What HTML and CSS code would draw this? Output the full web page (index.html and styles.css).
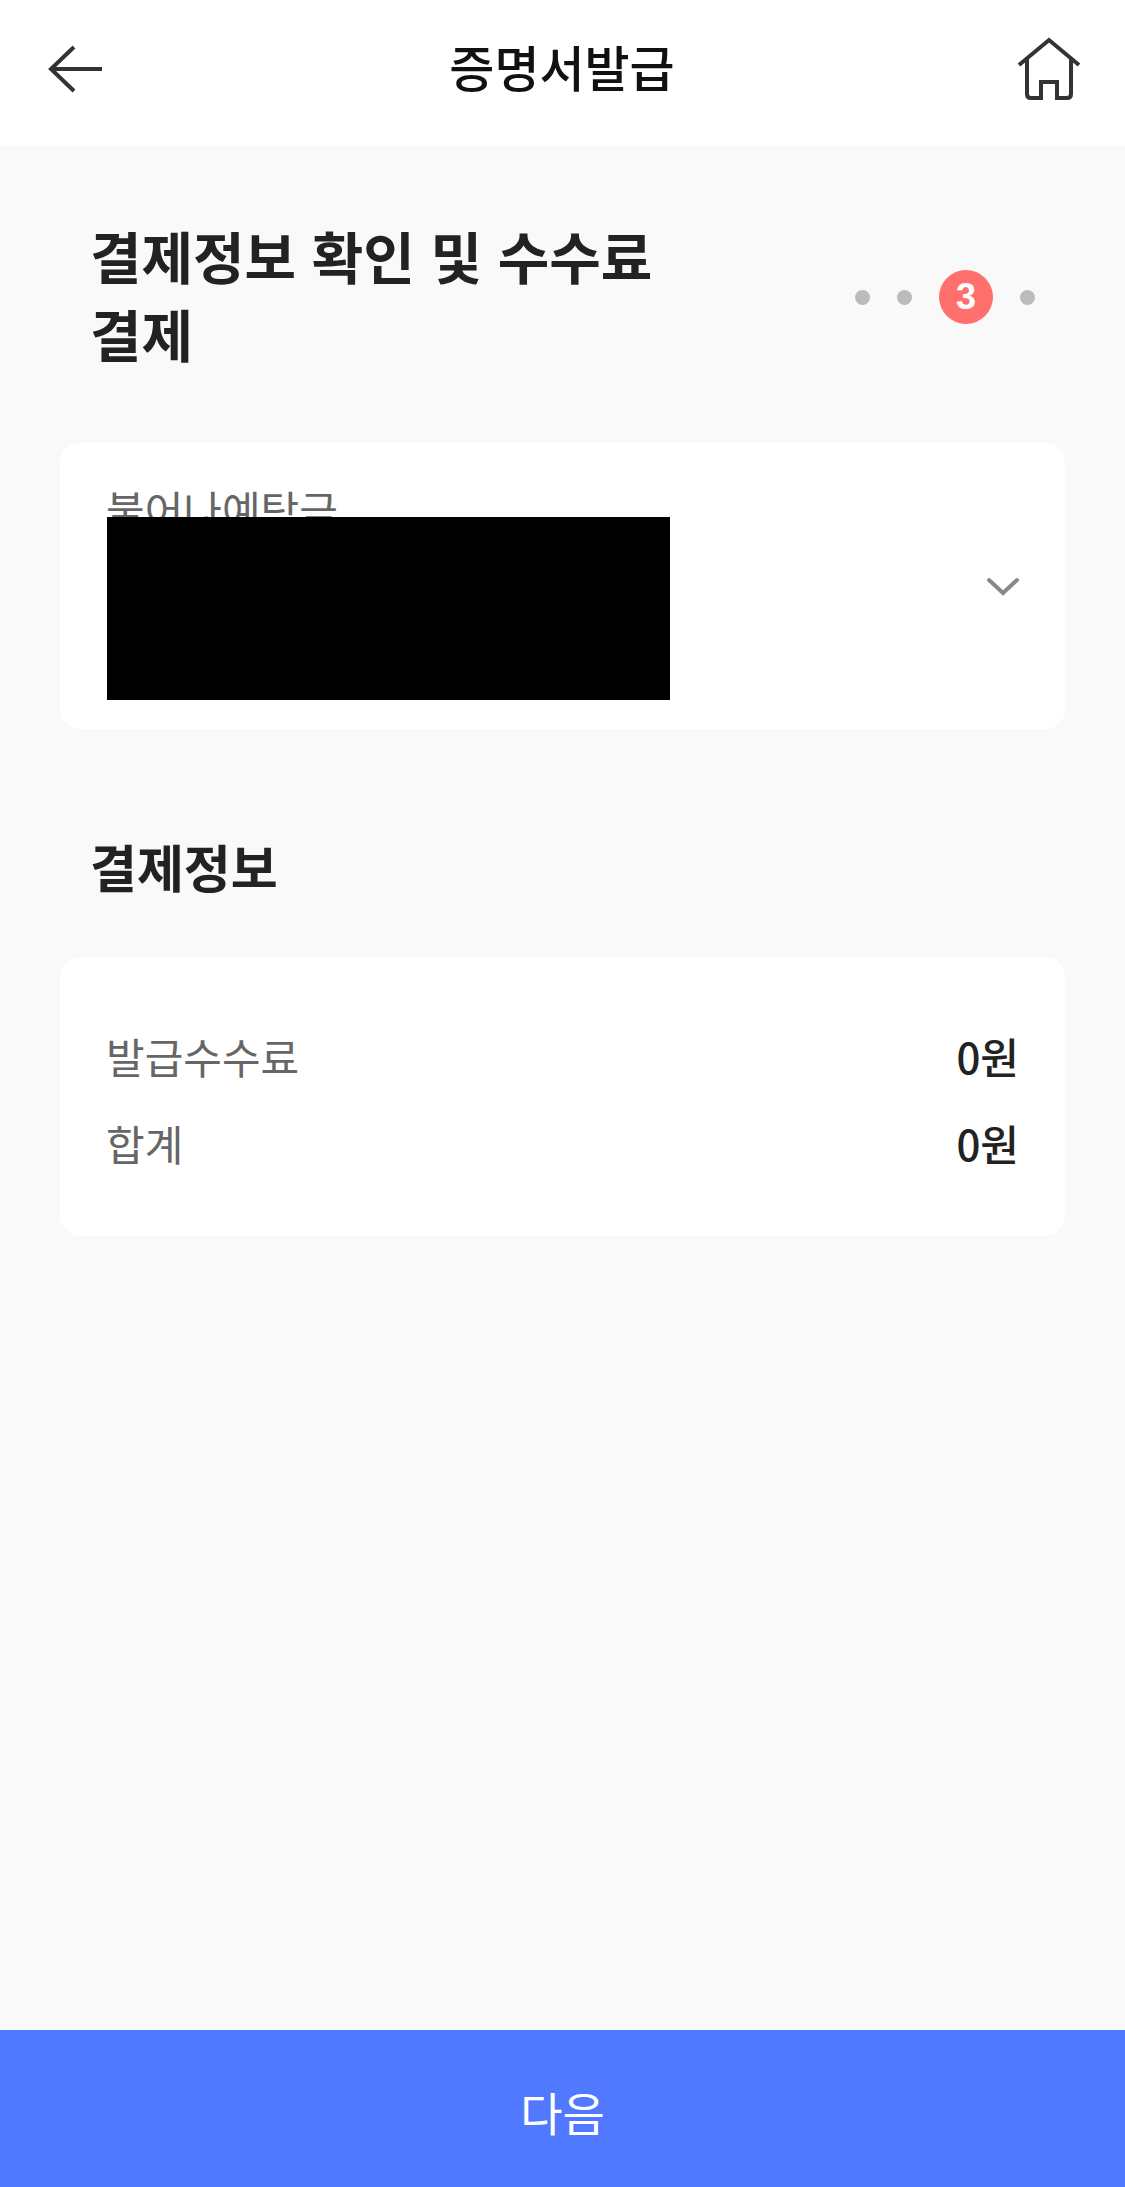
FILE: index.html
```html
<!DOCTYPE html>
<html lang="ko">
    <head>

        <meta charset="utf-8">
        <meta name="viewport" content="width=device-width, initial-scale=1">
        <title>증명서발급</title>

        <link rel="stylesheet" href="styles.css">

    </head>
    <body>

        <header class="header">
            <a class="header-link" href="#" aria-label="뒤로">
                <svg width="64" height="64" viewBox="0 0 64 64">
                    <path d="M31 10 L8 32 L31 54 M8 32 H59"></path>
                </svg>
            </a>
            <h1 class="header-title">증명서발급</h1>
            <a class="header-link" href="#" aria-label="홈">
                <svg class="home" width="64" height="64" viewBox="0 0 64 64">
                    <path d="M2 28 L32 3 L62 28 M10 22 V57 Q10 61 14 61 H24 V45 H40 V61 H50 Q54 61 54 57 V22"></path>
                </svg>
            </a>
        </header>

        <main class="content">

            <div class="intro">
                <h2 class="intro-title">결제정보 확인 및 수수료 결제</h2>
                <ol class="steps">
                    <li></li>
                    <li></li>
                    <li class="active">3</li>
                    <li></li>
                </ol>
            </div>

            <div class="card account">
                <select class="account-select" aria-label="출금계좌">
                    <option>불어나예탁금</option>
                </select>
                <div class="account-mask"></div>
                <svg class="account-arrow" width="36" height="24" viewBox="0 0 36 24">
                    <path d="M4 5 L18 18 L32 5"></path>
                </svg>
            </div>

            <h2 class="section-title">결제정보</h2>

            <dl class="card fees">
                <div class="fee">
                    <dt>발급수수료</dt>
                    <dd>0원</dd>
                </div>
                <div class="fee">
                    <dt>합계</dt>
                    <dd>0원</dd>
                </div>
            </dl>

        </main>

        <button class="next" type="button">다음</button>

    </body>
</html>
```
FILE: styles.css
```css
* {
    box-sizing: border-box;
}
body {
    display: flex;
    flex-direction: column;
    min-height: 100vh;
    margin: 0;
    background-color: #F9F9F9;
    font-family: "Noto Sans CJK KR", sans-serif;
    font-size: 42px;
    line-height: 60px;
    color: #222;
}
h1, h2, dl, dd, ol {
    margin: 0;
    padding: 0;
}
svg {
    display: block;
    fill: none;
    stroke: #333;
    stroke-width: 4;
}

/** Header **/
.header {
    display: flex;
    align-items: center;
    justify-content: space-between;
    padding: 34px 44px 42px 43px;
    background-color: #FFF;
}
.header-title {
    padding-bottom: 6px;
    font-size: 49px;
    font-weight: 500;
    line-height: 64px;
    color: #111;
}

/** Content **/
.content {
    flex: 1;
    padding: 0 60px;
}

/** Intro **/
.intro {
    display: flex;
    align-items: center;
    justify-content: space-between;
    padding: 70px 30px 68px;
}
.intro-title {
    max-width: 64%;
    padding-bottom: 3px;
    font-size: 56px;
    font-weight: 700;
    line-height: 78px;
    word-break: keep-all;
}

/** Steps **/
.steps {
    display: flex;
    align-items: center;
    gap: 27px;
    padding-top: 3px;
    list-style-type: none;
}
.steps li {
    width: 15px;
    height: 15px;
    border-radius: 100%;
    background-color: #BBB;
}
.steps li.active {
    width: 54px;
    height: 54px;
    background-color: #FF706C;
    text-align: center;
    font-family: "Liberation Sans", sans-serif;
    font-size: 36px;
    font-weight: bold;
    line-height: 54px;
    color: #FFF;
}

/** Card **/
.card {
    border-radius: 20px;
    background-color: #FFF;
}

/** Account **/
.account {
    position: relative;
}
.account-select {
    display: block;
    width: 100%;
    height: 286px;
    padding: 36px 46px 190px;
    border: 0;
    border-radius: 20px;
    background-color: transparent;
    appearance: none;
    font: inherit;
    color: #666;
}
.account-mask {
    position: absolute;
    top: 74px;
    bottom: 29px;
    left: 47px;
    width: 56%;
    background-color: #000;
    pointer-events: none;
}
.account-arrow {
    position: absolute;
    top: 132px;
    right: 44px;
    stroke: #888;
    stroke-linecap: round;
    pointer-events: none;
}

/** Section title **/
.section-title {
    padding: 107px 30px 61px;
    font-size: 51px;
    font-weight: 700;
}

/** Fees **/
.fees {
    display: flex;
    flex-direction: column;
    gap: 27px;
    padding: 69px 46px 63px;
}
.fee {
    display: flex;
    justify-content: space-between;
}
.fee dt {
    color: #666;
}
.fee dd {
    font-weight: 500;
}

/** Next button **/
.next {
    padding: 51px 0 45px;
    border: 0;
    background-color: #5079FF;
    font-family: inherit;
    font-size: 46px;
    line-height: 61px;
    color: #FFF;
    cursor: pointer;
}
```
